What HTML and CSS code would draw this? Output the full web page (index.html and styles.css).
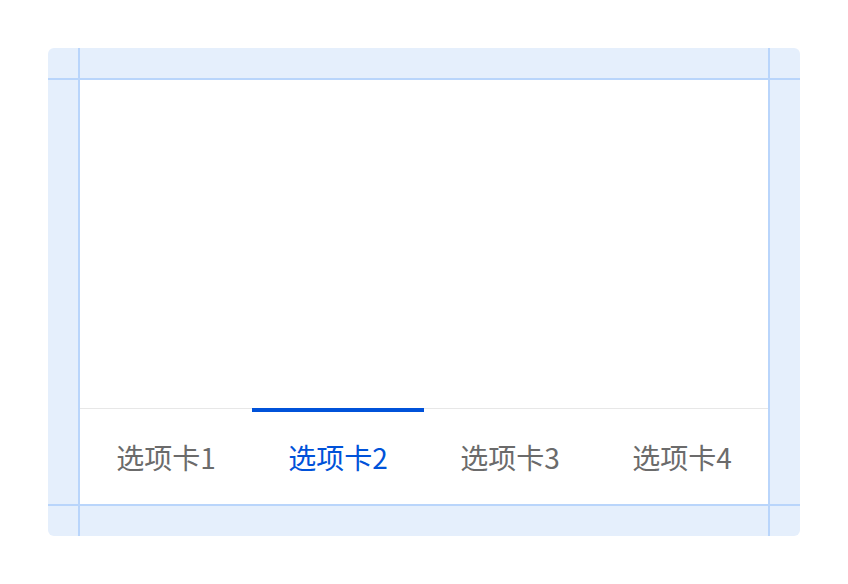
FILE: index.html
```html
<!DOCTYPE html>
<html lang="zh-CN">
<head>
  <meta charset="UTF-8">
  <meta name="viewport" content="width=device-width, initial-scale=1.0">
  <title>Tab Bar</title>
  <link rel="stylesheet" href="styles.css">
</head>
<body>
  <div class="frame">
    <div class="screen">
      <div class="content"></div>
      <nav class="tab-bar">
        <button class="tab">选项卡1</button>
        <button class="tab active">选项卡2</button>
        <button class="tab">选项卡3</button>
        <button class="tab">选项卡4</button>
      </nav>
    </div>

    <!-- guide lines -->
    <span class="guide guide-v guide-left"></span>
    <span class="guide guide-v guide-right"></span>
    <span class="guide guide-h guide-top"></span>
    <span class="guide guide-h guide-bottom"></span>
  </div>
</body>
</html>
```

FILE: styles.css
```css
body {
  margin: 0;
  background: #fff;
  font-family: "Noto Sans CJK SC", "Noto Sans", sans-serif;
}

.frame {
  position: relative;
  width: 752px;
  height: 488px;
  margin: 48px;
  padding: 32px;
  box-sizing: border-box;
  background: #e5effc;
  border-radius: 6px;
}

.screen {
  width: 688px;
  height: 424px;
  background: #fff;
  display: flex;
  flex-direction: column;
}

.content {
  flex: 1;
}

.tab-bar {
  height: 96px;
  display: flex;
  border-top: 1px solid #e7e7e7;
  box-sizing: border-box;
}

.tab {
  flex: 1;
  position: relative;
  background: none;
  border: none;
  padding: 0;
  font-family: inherit;
  font-size: 28px;
  font-weight: 400;
  color: #6b6b6b;
  cursor: pointer;
}

.tab.active {
  color: #0052d9;
}

.tab.active::before {
  content: "";
  position: absolute;
  left: 0;
  right: 0;
  top: -1px;
  height: 4px;
  background: #0052d9;
}

.guide {
  position: absolute;
  background: #b9d5fb;
}

.guide-v {
  top: 0;
  bottom: 0;
  width: 2px;
}

.guide-h {
  left: 0;
  right: 0;
  height: 2px;
}

.guide-left { left: 30px; }
.guide-right { left: 720px; }
.guide-top { top: 30px; }
.guide-bottom { top: 456px; }
```
